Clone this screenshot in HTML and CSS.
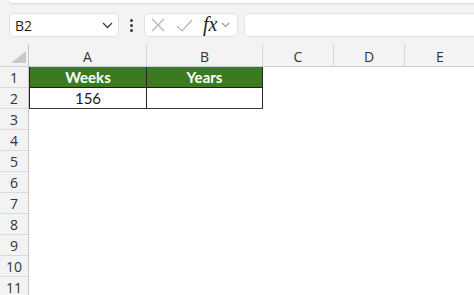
FILE: index.html
```
<!DOCTYPE html>
<html>
	<head>
		<meta charset="UTF-8" />
		<title>Weeks to years</title>
		<link rel="stylesheet" href="styles.css">
	</head>
	<body>
		<div class="top">
			<div class="ribbon-edge"></div>
			<div class="fbar">
				<div class="namebox">
					<span>B2</span>
					<svg width="11" height="7" viewBox="0 0 11 7"><path d="M1 1 L5.5 5.5 L10 1" fill="none" stroke="#404040" stroke-width="1.3"/></svg>
				</div>
				<div class="dots"><i></i><i></i><i></i></div>
				<div class="fxbox">
					<svg class="ic" width="14" height="14" viewBox="0 0 14 14"><path d="M1 1 L13 13 M13 1 L1 13" stroke="#b4b4b4" stroke-width="1.2"/></svg>
					<svg class="ic" width="17" height="13" viewBox="0 0 17 13"><path d="M1 7 L6 12 L16 1" fill="none" stroke="#b4b4b4" stroke-width="1.2"/></svg>
					<span class="fx">fx</span>
					<svg width="9" height="6" viewBox="0 0 9 6"><path d="M1 1 L4.5 4.5 L8 1" fill="none" stroke="#9a9a9a" stroke-width="1.1"/></svg>
				</div>
				<div class="input"></div>
			</div>
		</div>

		<div class="sheet">
			<div class="corner"><b></b></div>
			<div class="colhead">A</div>
			<div class="colhead">B</div>
			<div class="colhead">C</div>
			<div class="colhead">D</div>
			<div class="colhead">E</div>

			<div class="rowhead">1</div>
			<div class="cell head first">Weeks</div>
			<div class="cell head">Years</div>
			<div></div><div></div><div></div>

			<div class="rowhead">2</div>
			<div class="cell first">156</div>
			<div class="cell"></div>
			<div></div><div></div><div></div>

			<div class="rowhead">3</div><div></div><div></div><div></div><div></div><div></div>
			<div class="rowhead">4</div><div></div><div></div><div></div><div></div><div></div>
			<div class="rowhead">5</div><div></div><div></div><div></div><div></div><div></div>
			<div class="rowhead">6</div><div></div><div></div><div></div><div></div><div></div>
			<div class="rowhead">7</div><div></div><div></div><div></div><div></div><div></div>
			<div class="rowhead">8</div><div></div><div></div><div></div><div></div><div></div>
			<div class="rowhead">9</div><div></div><div></div><div></div><div></div><div></div>
			<div class="rowhead">10</div><div></div><div></div><div></div><div></div><div></div>
			<div class="rowhead">11</div><div></div><div></div><div></div><div></div><div></div>
		</div>
	</body>
</html>
```

FILE: styles.css
```
html, body {
	margin:0px; padding:0px;
	background:#ffffff;
	overflow:hidden;
}

body {
	font-family: "Open Sans", "Noto Sans", sans-serif;
	color:#262626;
}

/* formula bar area */
.top {
	height:44px;
	background:#f3f3f3;
	box-sizing:border-box;
}

.ribbon-edge {
	height:3px;
	margin-left:9px;
	background:#ffffff;
	border-bottom:1px solid #dedede;
	border-bottom-left-radius:5px;
	box-shadow:0 1px 2px rgba(0,0,0,0.06);
}

.fbar {
	display:flex;
	align-items:center;
	height:24px;
	margin-top:9px;
	padding-left:9px;
}

.namebox, .fxbox, .input {
	height:24px;
	box-sizing:border-box;
	background:#ffffff;
	border:1px solid #e2e2e2;
	border-radius:5px;
	display:flex;
	align-items:center;
}

.namebox {
	width:110px;
	padding:0 5px 0 5px;
	justify-content:space-between;
	font-size:14px;
	color:#1f1f1f;
}

.dots {
	width:25px;
	display:flex;
	flex-direction:column;
	align-items:center;
	gap:2px;
}
.dots i { width:3px; height:3px; background:#3c3c3c; border-radius:50% }

.fxbox {
	width:94px;
	padding-left:6px;
}
.fxbox .ic { margin-right:11px }
.fxbox .ic + .ic { margin-right:10px }
.fx {
	font-family:"Liberation Serif", "DejaVu Serif", serif;
	font-style:italic;
	font-size:20px;
	color:#222;
	margin-right:4px;
	line-height:1;
	padding-bottom:3px;
}

.input {
	flex:1;
	margin-left:6px;
	border-right:none;
	border-radius:5px 0 0 5px;
}

/* the grid */
.sheet {
	display:grid;
	grid-template-columns:29px 118px 116px 71px 71px 71px;
	grid-template-rows:23px repeat(11, 21px);
}

.corner, .colhead, .rowhead {
	background:#f3f3f3;
	box-sizing:border-box;
	display:flex;
	align-items:center;
	justify-content:center;
	font-size:14px;
	color:#333333;
}

.corner {
	border-right:1px solid #c6c6c6;
	border-bottom:1px solid #cfcfcf;
	align-items:flex-end;
	justify-content:flex-end;
	padding:0 2px 3px 0;
}
.corner b {
	width:0; height:0;
	border-left:15px solid transparent;
	border-bottom:12px solid #c8c8c8;
}

.colhead {
	border-right:1px solid #d6d6d6;
	border-bottom:1px solid #cfcfcf;
	padding-top:2px;
}

.rowhead {
	border-right:1px solid #c6c6c6;
	border-bottom:1px solid #dadada;
	padding-top:1px;
}

.cell {
	box-sizing:border-box;
	border-right:1px solid #262626;
	border-bottom:1px solid #3a3a3a;
	display:flex;
	align-items:center;
	justify-content:center;
	font-family:"Lato", "Liberation Sans", sans-serif;
	font-size:15px;
	color:#1a1a1a;
}
.cell.first { border-left:1px solid #262626 }

.cell.head {
	background:#3b7a1f;
	color:#ffffff;
	font-weight:bold;
	border-bottom-color:#1e1e1e;
}
```
